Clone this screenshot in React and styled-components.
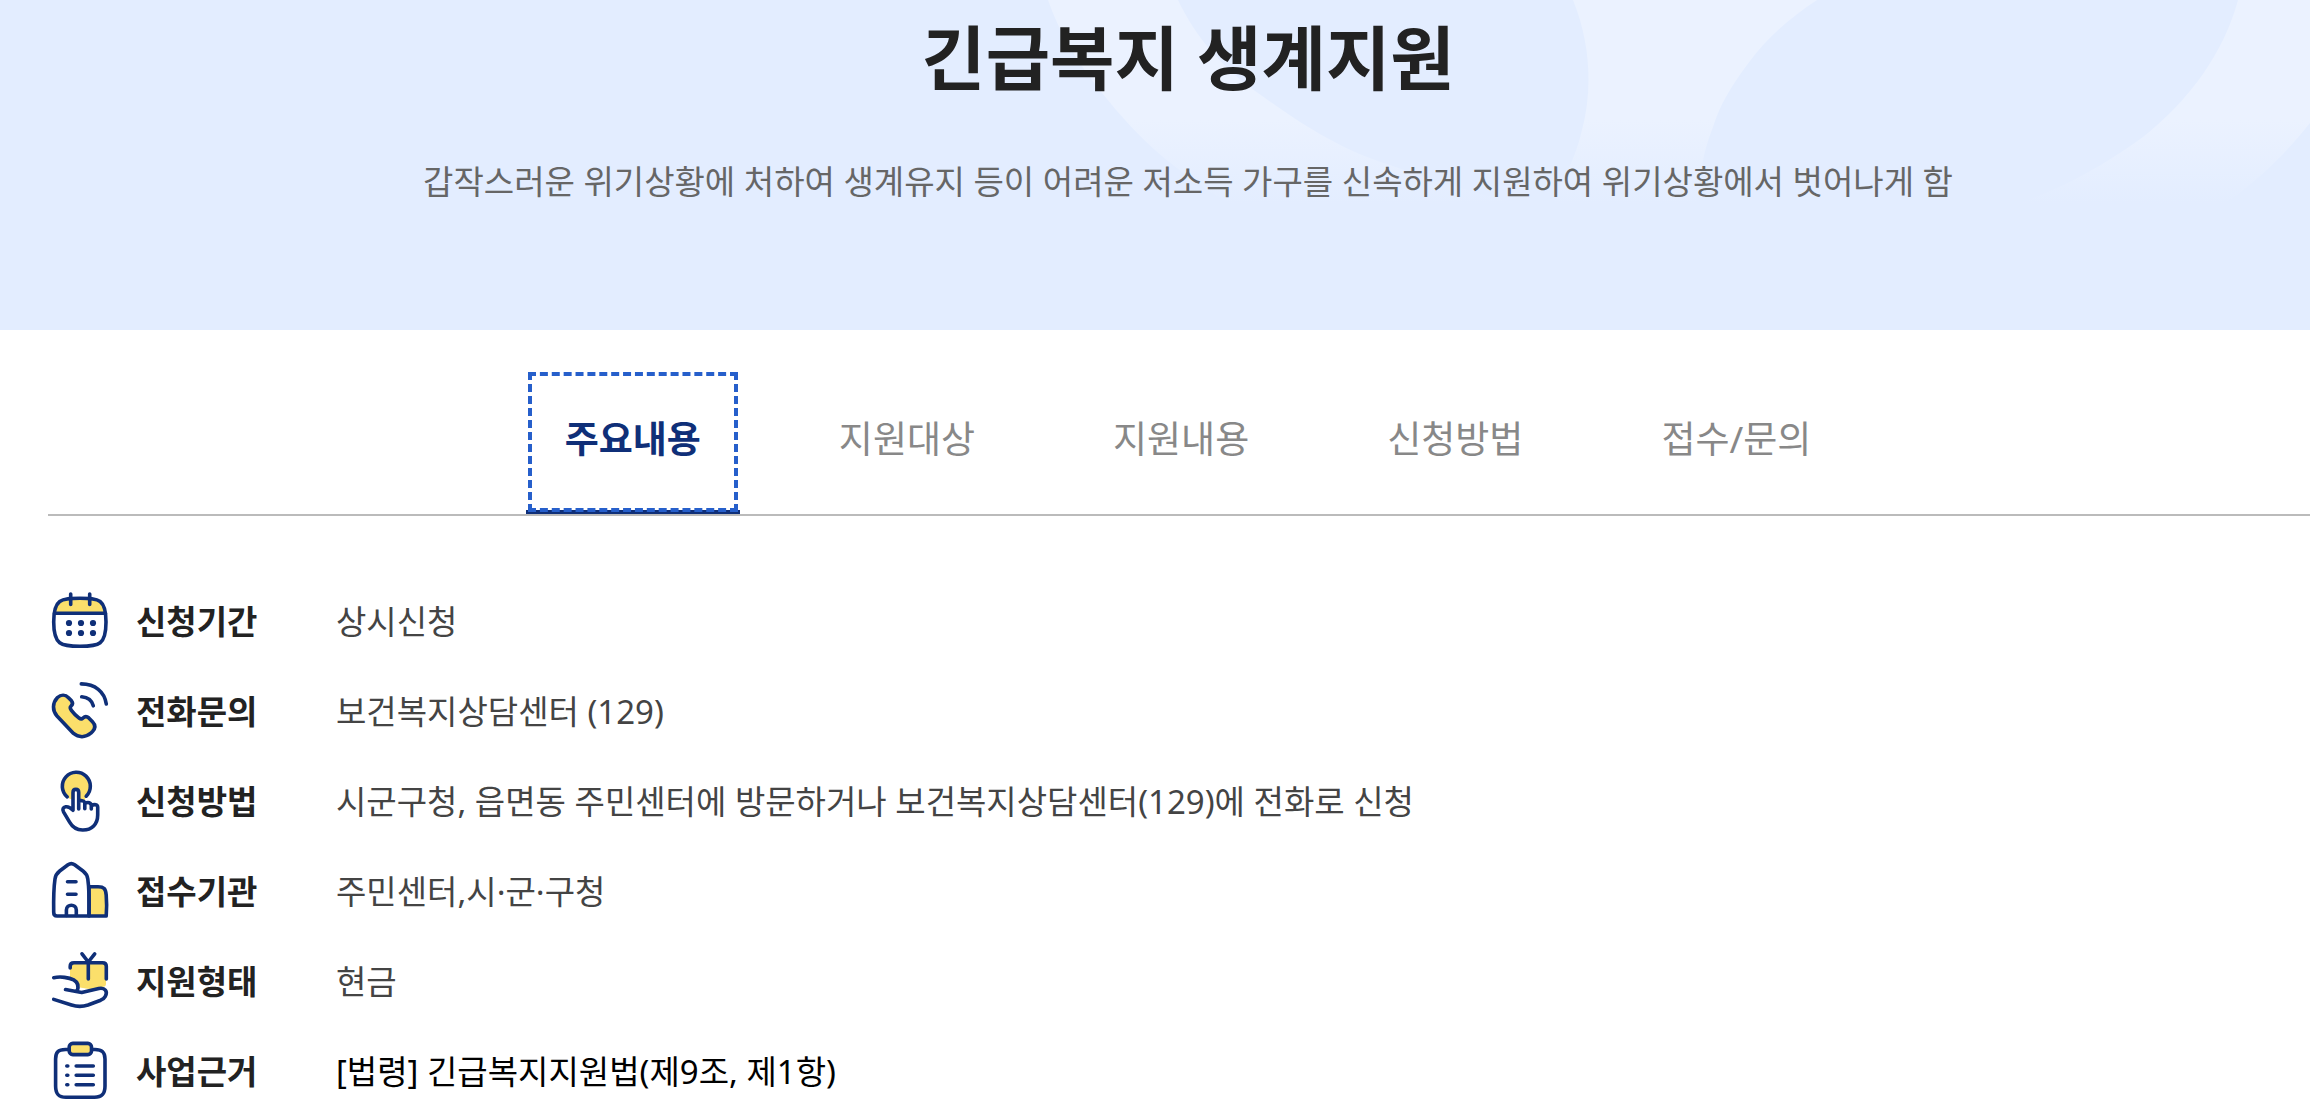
import styled, { createGlobalStyle } from "styled-components";

const GlobalStyle = createGlobalStyle`
	:root {
		--navy: #0f2f78;
		--focus-blue: #265fcb;
		--yellow: #fbdf6b;
		--hero-blue: #e3edff;
	}

	* {
		box-sizing: border-box;
	}

	body {
		margin: 0;
		background: #fff;
		color: #222;
		font-family: "Noto Sans", "Noto Sans CJK KR", sans-serif;
		overflow: hidden;
	}

	h1, p, ul, dl, dd {
		margin: 0;
		padding: 0;
	}
`;

const Hero = styled.header`
	position: relative;
	display: flex;
	flex-direction: column;
	align-items: center;
	gap: 48px;
	height: 330px;
	padding: 8px 0 0 66px;
	background: var(--hero-blue);
	overflow: hidden;
`;

const HeroPattern = styled.svg`
	position: absolute;
	top: 0;
	right: 0;
	width: 1310px;
	height: 210px;
`;

const Title = styled.h1`
	position: relative;
	font-size: 70px;
	line-height: 100px;
	font-weight: 700;
`;

const Summary = styled.p`
	position: relative;
	font-size: 33px;
	line-height: 52px;
	color: #666;
`;

const Main = styled.main`
	padding: 40px 0 0 48px;
`;

const TabList = styled.ul`
	display: flex;
	justify-content: center;
	gap: 60px;
	padding-left: 18px;
	list-style: none;
	border-bottom: 2px solid #bbb;
`;

const Tab = styled.a`
	display: block;
	padding: 38px 39px 40px;
	border-bottom: 4px solid ${({ $active }) => ($active ? "var(--navy)" : "transparent")};
	outline: ${({ $active }) => ($active ? "4px dashed var(--focus-blue)" : "none")};
	outline-offset: -6px;
	color: ${({ $active }) => ($active ? "var(--navy)" : "#888")};
	font-size: 37px;
	line-height: 62px;
	font-weight: ${({ $active }) => ($active ? 700 : 400)};
	text-decoration: none;
`;

const InfoList = styled.dl`
	display: grid;
	gap: 22px;
	padding-top: 72px;
`;

const InfoRow = styled.div`
	display: grid;
	grid-template-columns: 288px 1fr;
	font-size: 33px;
	line-height: 68px;
`;

const Label = styled.dt`
	display: flex;
	align-items: flex-start;
	gap: 24px;
	font-weight: 700;
`;

const Value = styled.dd`
	color: #444;
`;

const LawLink = styled.a`
	color: #000;
	text-decoration: none;
`;

const Icon = styled.svg`
	flex: none;
	width: 64px;
	height: 64px;
	fill: none;
	stroke: var(--navy);
	stroke-width: 3.6;
	stroke-linecap: round;
	stroke-linejoin: round;

	.fill {
		fill: var(--yellow);
	}

	.plain {
		fill: var(--yellow);
		stroke: none;
	}

	.dot {
		fill: var(--navy);
		stroke: none;
	}
`;

const CalendarIcon = () => (
	<Icon viewBox="0 0 64 64" aria-hidden="true">
		<path className="plain" d="M6 25C7 15 10 10.3 21 10.3H43C54 10.3 57 15 58 25Z" />
		<path d="M32 10.3C51 10.3 58 11 58 34C58 57 51 58.3 32 58.3C13 58.3 5.7 57 5.7 34C5.7 11 13 10.3 32 10.3Z" />
		<path d="M6.5 25.3H57.5M22.7 6V16.5M41.7 6V16.5" />
		{[35, 45].map((y) => [21, 33, 45].map((x) => <circle key={`${x}-${y}`} className="dot" cx={x} cy={y} r="3.1" />))}
	</Icon>
);

const PhoneIcon = () => (
	<Icon viewBox="0 0 64 64" aria-hidden="true">
		<path
			className="fill"
			d="M9.5 19.5C13 16.4 17.5 16.6 20.5 19.7L23.5 22.8C25.2 24.8 24.7 26.5 22.9 28.2C21.6 29.5 22.2 30.7 23.4 32.3C25.6 35.2 28 37.9 31 40C32.7 41.3 33.8 41.3 35 40C37 38 39 38.2 40.8 39.9L44.5 43.7C47.6 47 47.3 50.5 44.5 53.5L42.8 55.2C37 60 30.5 59.4 25.5 55.4L9 38C4.2 32.5 4.3 25 9.5 19.5Z"
		/>
		<path d="M33.3 5.9C47 6 56.5 13.5 58.3 26M33.7 18.8C39.5 19.2 43.8 22.3 45.3 27.8" />
	</Icon>
);

const TouchIcon = () => (
	<Icon viewBox="0 0 64 64" aria-hidden="true">
		<path className="plain" d="M28.3 4.2A13.8 13.8 0 0 1 38 28.7L36 34L31 32V24C30 20.5 26 20.5 25 24V32L19.7 29.7A13.8 13.8 0 0 1 28.3 4.2Z" />
		<path d="M19.2 28.9A14 14 0 1 1 38.2 28.2" />
		<path d="M25 42.3V24.6C25 20.3 30.7 20.3 30.7 24.6V41M25 42.3C22.5 39.8 20.5 38.3 17.8 38.8C15 39.4 14.2 41.2 15.5 43.8L21.6 54.2C24.7 59.7 29.5 62 34.5 62C44 62.2 49.7 56 49.7 47V39.3C49.7 36.5 46.5 35.8 43.3 37.7M30.7 33C33.5 32.2 36.6 32.7 36.8 35.2V40.7M36.8 35.5C40 33.7 43.2 34.5 43.3 37.7V41" />
	</Icon>
);

const BuildingIcon = () => (
	<Icon viewBox="0 0 64 64" aria-hidden="true">
		<path className="fill" d="M41 28.7H50C56 28.7 57.7 31 58.2 37C58.8 44 58.8 51 58.2 58H41Z" />
		<path d="M20 6.8C22.3 5.2 24.3 5.2 26.6 6.8L35 13C38 15.3 39.3 17.2 39.8 21C41.4 32 41.3 45 41 58H9C6.5 58 5.7 56.8 5.7 54.3C5.5 43 5.4 32 7 21C7.5 17.2 8.7 15.4 11.7 13Z" />
		<path d="M19.5 23.7H28M19.5 36.3H28M18.4 57.5V52C18.4 45.6 28.3 45.6 28.3 52V57.5" />
	</Icon>
);

const GiftIcon = () => (
	<Icon viewBox="0 0 64 64" aria-hidden="true">
		<path className="plain" d="M22 15H58V36Q58 39 54 39L44 41.5L32 39.5L27 31L22 30Z" />
		<path d="M22.2 20V18.3Q22.2 14.7 26 14.7H54.5Q58.3 14.7 58.3 18.3V31M40.3 14.7V31M34 5.8L40.3 14L46.7 5.8" />
		<path d="M5.7 29.7C12.5 28.3 21 29.4 25.7 31.9C29.7 34.2 31 38.5 29 43.5M17.5 41.6L33.7 44.5L50.8 40.5C57 39.3 60 43.5 57.3 48.3C56.4 50 54.8 51.3 52.7 52.2L40 57C34 59 29 58.8 23.5 57L5.7 51.4" />
	</Icon>
);

const ClipboardIcon = () => (
	<Icon viewBox="0 0 64 64" aria-hidden="true">
		<path d="M21 11.5H17.5C10 11.5 7.6 14.5 7.6 21V48C7.6 56 10.5 59.2 18 59.2H46.5C54 59.2 57 56 57 48V21C57 14.5 54.3 11.5 47 11.5H43.5" />
		<rect className="fill" x="21.2" y="5.4" width="22.3" height="11.2" rx="3.6" />
		<path d="M28.2 28H45.3M28.2 37.3H45.3M28.2 46.7H45.3M18.8 28H19.8M18.8 37.3H19.8M18.8 46.7H19.8" />
	</Icon>
);

const TABS = ["주요내용", "지원대상", "지원내용", "신청방법", "접수/문의"];

const INFO = [
	{ icon: CalendarIcon, label: "신청기간", value: "상시신청" },
	{ icon: PhoneIcon, label: "전화문의", value: "보건복지상담센터 (129)" },
	{
		icon: TouchIcon,
		label: "신청방법",
		value: "시군구청, 읍면동 주민센터에 방문하거나 보건복지상담센터(129)에 전화로 신청",
	},
	{ icon: BuildingIcon, label: "접수기관", value: "주민센터,시·군·구청" },
	{ icon: GiftIcon, label: "지원형태", value: "현금" },
	{
		icon: ClipboardIcon,
		label: "사업근거",
		value: <LawLink href="#law">[법령] 긴급복지지원법(제9조, 제1항)</LawLink>,
	},
];

const App = () => {
	return (
		<>
			<GlobalStyle />
			<Hero>
				<HeroPattern viewBox="1000 0 1310 210" aria-hidden="true">
					<defs>
						<linearGradient id="fade" gradientUnits="userSpaceOnUse" x1="0" y1="120" x2="0" y2="204">
							<stop offset="0" stopColor="#ebf2ff" />
							<stop offset="1" stopColor="#ebf2ff" stopOpacity="0" />
						</linearGradient>
					</defs>
					<g fill="url(#fade)">
						<path d="M1048 0H1178C1195 36 1222 68 1258 93C1298 122 1340 150 1390 165C1425 177 1470 192 1520 204L1240 210C1172 170 1140 140 1102 93C1078 63 1060 35 1048 0Z" />
						<path d="M1573 0H1817C1790 18 1767 37 1747 65C1730 88 1720 105 1713 127C1706 145 1700 165 1697 210H1550C1563 180 1576 157 1582 130C1593 88 1590 42 1573 0Z" />
						<path d="M2238 0H2310V123C2290 148 2265 175 2225 204H2015C2060 190 2105 165 2143 137C2190 100 2224 52 2238 0Z" />
					</g>
				</HeroPattern>
				<Title>긴급복지 생계지원</Title>
				<Summary>
					갑작스러운 위기상황에 처하여 생계유지 등이 어려운 저소득 가구를 신속하게 지원하여 위기상황에서 벗어나게 함
				</Summary>
			</Hero>

			<Main>
				<nav>
					<TabList>
						{TABS.map((tab, index) => (
							<li key={tab}>
								<Tab href={`#tab-${index}`} $active={index === 0}>
									{tab}
								</Tab>
							</li>
						))}
					</TabList>
				</nav>

				<InfoList>
					{INFO.map(({ icon: RowIcon, label, value }) => (
						<InfoRow key={label}>
							<Label>
								<RowIcon />
								{label}
							</Label>
							<Value>{value}</Value>
						</InfoRow>
					))}
				</InfoList>
			</Main>
		</>
	);
};

export default App;
